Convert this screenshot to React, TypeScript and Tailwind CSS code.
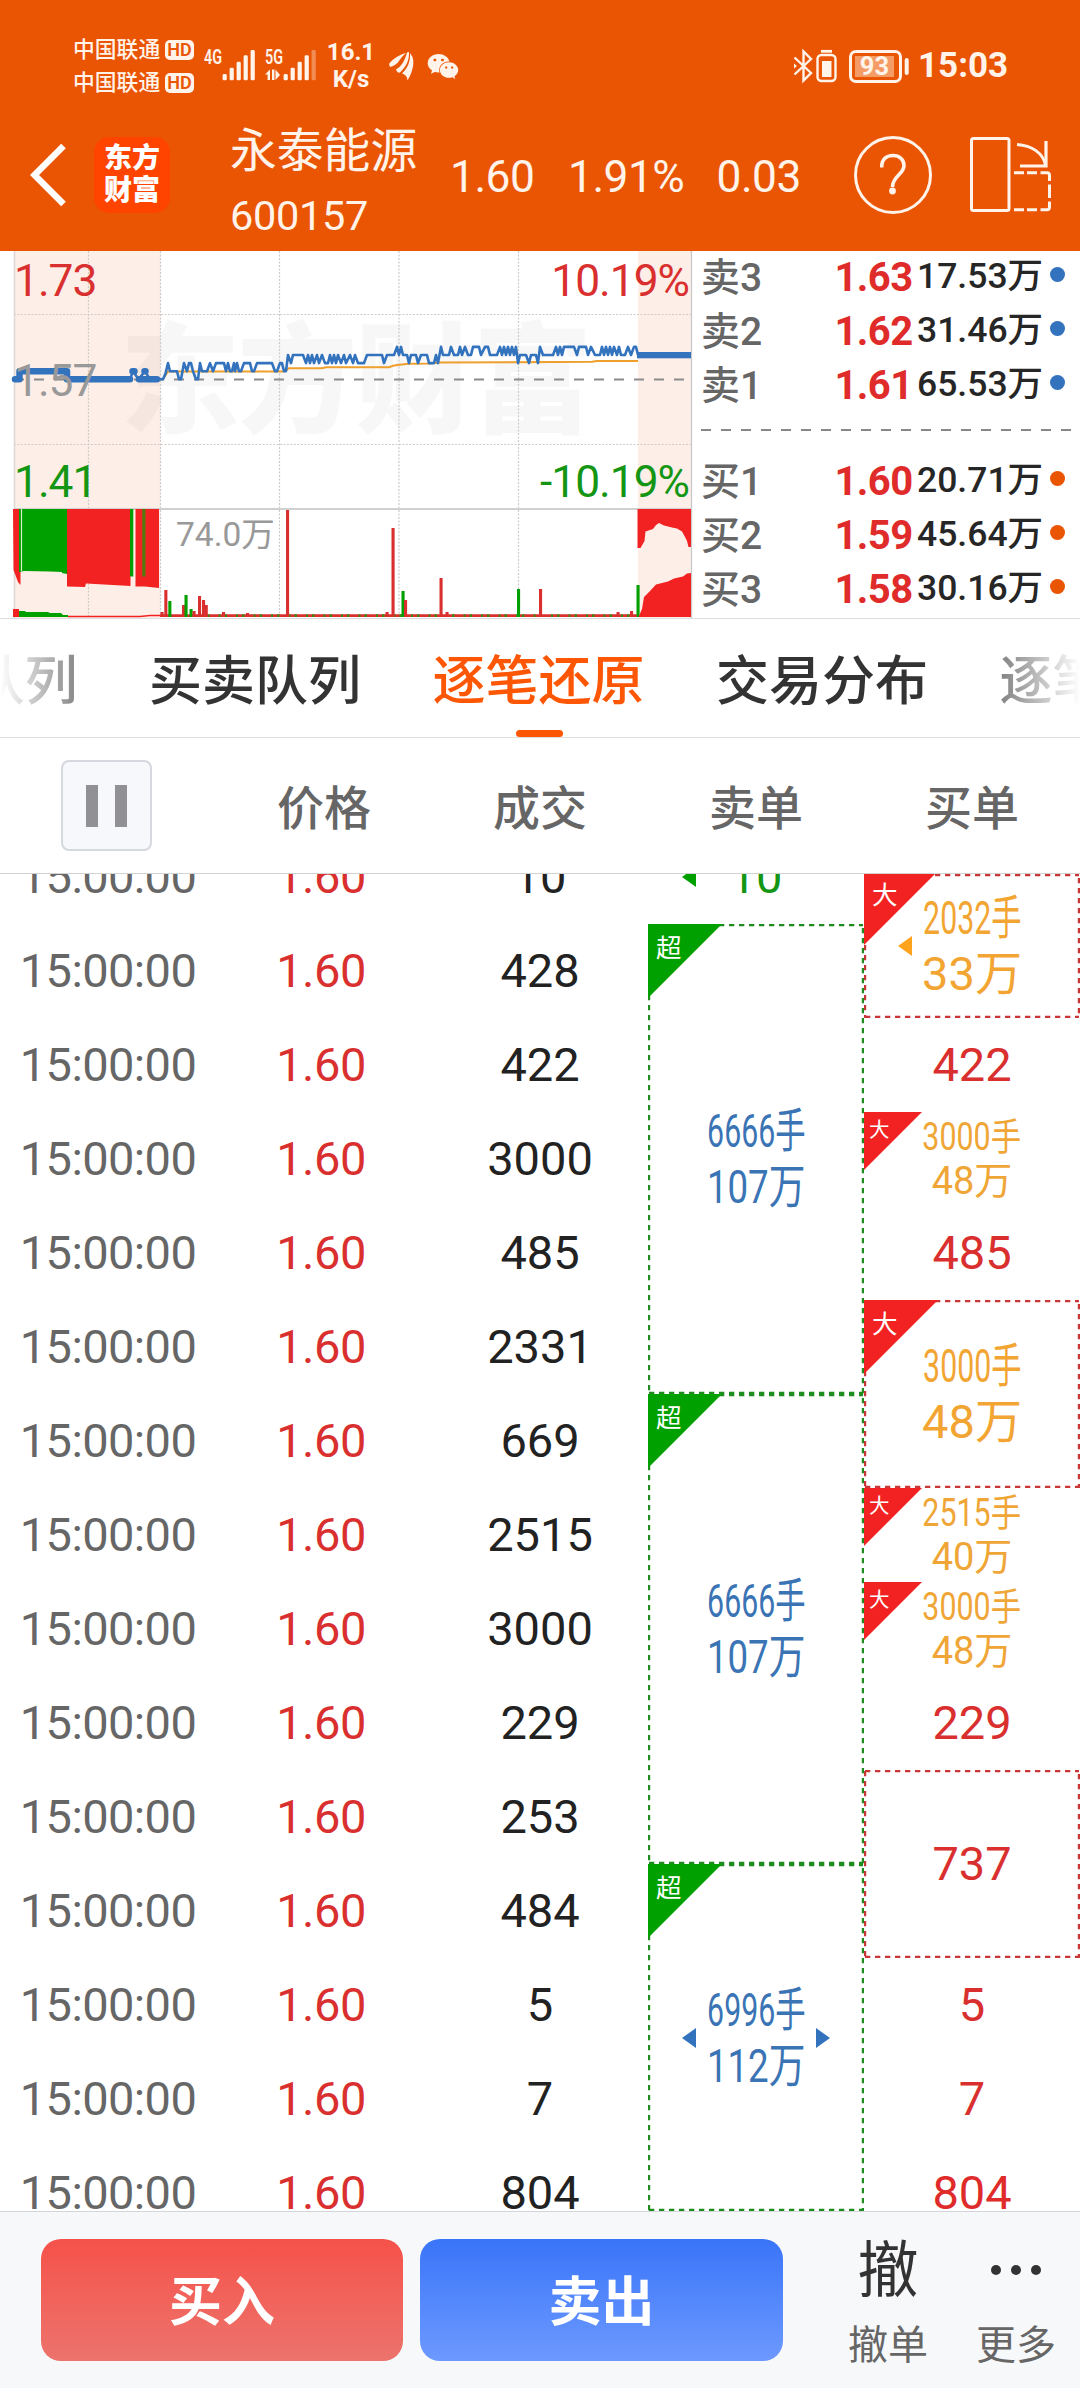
import React from "react";
import { FaWeixin } from "react-icons/fa";

const RED = "#d9302f";
const VOL_RED = "#f32222";
const GREEN = "#00a000";
const BLUE = "#3373bd";

/* ---------------------------------------------------------------- header */

function Carrier() {
  return (
    <div className="flex h-[33px] items-center">
      <span className="w-[92px] text-[21.800px] font-medium leading-[33px]">中国联通</span>
      <span className="flex h-[20px] w-[29px] items-center justify-center rounded-[5px] bg-[#fff3ea] text-[18px] font-semibold leading-[20px] text-[#ea5504]">
        HD
      </span>
    </div>
  );
}

function Signal({ label, faded, data }: { label: string; faded?: boolean; data?: boolean }) {
  const bars = [
    [0, 24],
    [7, 17.7],
    [14, 11.7],
    [21, 5.3],
    [28, 0],
  ];
  return (
    <svg width="52" height="40" viewBox="0 0 52 40" className="shrink-0" fill="#fff3ea">
      <text x="0" y="18" fontSize="20.5" fontWeight="600" textLength="18" lengthAdjust="spacingAndGlyphs">
        {label}
      </text>
      {bars.map(([x, y], i) => (
        <rect
          key={i}
          x={18.6 + x}
          y={4 + y}
          width="4.2"
          height={30.3 - y}
          rx="1.4"
          opacity={faded && i === 4 ? 0.35 : 1}
        />
      ))}
      {data && <path d="M0 28.5 5 23.5V34H2.6V28.5ZM7 23.5h2.4V34H7ZM10.5 23.5l4.5 5.5-4.5 5Z" />}
    </svg>
  );
}

function StatusBar() {
  return (
    <div className="flex h-[66px] items-center pl-[73px] pr-[72px]">
      <div className="flex flex-col">
        <Carrier />
        <Carrier />
      </div>
      <div className="ml-[10px] flex h-full items-center">
        <Signal label="4G" />
        <div className="w-[9px]" />
        <Signal label="5G" faded data />
      </div>
      <div className="ml-[8px] flex w-[52px] flex-col items-center text-[24px] font-bold leading-[27px]">
        <span>16.1</span>
        <span>K/s</span>
      </div>
      <svg width="25" height="29" viewBox="0 0 25 29" className="ml-[12px] shrink-0" fill="#fff3ea">
        <path d="M0 12C4 6.500 10 3 17 1 13 4 11 8 8.500 11 6 13.500 3 14.500 1 15Z" />
        <path d="M7 17.500C13 14 16 8 18 .5L20 0C20.500 8 17 15 11 20.500 9.500 21 8 20.500 7 17.500Z" />
        <path d="M13 21.500C19 16 21.500 9 21 1L23.500 5C25 9 24.500 15 22.500 20 21.500 23 20 26 18.500 28.500 18.500 25.500 17 23 13 21.500Z" />
      </svg>
      <FaWeixin className="ml-[13px] h-[29px] w-[32px] text-[#fff3ea]" />
      <div className="ml-auto flex items-center">
        <svg width="117" height="36" viewBox="794 47 117 36" fill="none" stroke="#fff3ea" strokeWidth="2.4">
          <path d="M795.500 56.500 812 72 804.500 79.500V50.500L812 58 795.500 73.500" />
          <path d="M795 62.500v5l3-2.500Z" fill="#fff3ea" stroke="none" />
          <rect x="818.500" y="54" width="18" height="26" rx="4" />
          <path d="M822 50.300h11" strokeWidth="2.800" />
          <rect x="823" y="60" width="9.500" height="16" fill="#fff3ea" stroke="none" />
          <rect x="851.500" y="50.500" width="50" height="30" rx="5.500" strokeWidth="3" />
          <rect x="856" y="55" width="39" height="21" fill="#f49b66" stroke="none" />
          <rect x="905.700" y="57" width="4" height="17" rx="2" fill="#fff3ea" stroke="none" />
          <text x="875.500" y="74" fontSize="25.500" fontWeight="700" textAnchor="middle" fill="#fff3ea" stroke="none">
            93
          </text>
        </svg>
        <span className="ml-[8px] w-[90px] whitespace-nowrap text-[35px] font-bold leading-[66px]">15:03</span>
      </div>
    </div>
  );
}

function NavBar() {
  return (
    <div className="flex h-[152px] items-center">
      <svg width="36" height="64" viewBox="0 0 36 64" className="ml-[30px] shrink-0" fill="none" stroke="#fff" strokeWidth="6.500">
        <path d="M33.500 3 4.500 32 33.500 61" strokeLinejoin="miter" />
      </svg>
      <div className="ml-[28px] flex h-[76px] w-[76px] shrink-0 flex-col items-center justify-center rounded-[15px] bg-[#ff4400] text-[28px] font-black leading-[32px] text-white">
        <span>东方</span>
        <span>财富</span>
      </div>
      <div className="ml-[60px] flex w-[220px] shrink-0 flex-col pt-[16px]">
        <span className="text-[46.800px] leading-[66px]">永泰能源</span>
        <span className="text-[41.500px] leading-[64px] tracking-[-0.300px]">600157</span>
      </div>
      <div className="flex shrink-0 items-center whitespace-nowrap pt-[3px] text-[44.300px] leading-[60px] tracking-[-0.500px]">
        <span className="w-[118px]">1.60</span>
        <span className="w-[148.500px]">1.91%</span>
        <span className="w-[133.500px]">0.03</span>
      </div>
      <svg width="230" height="80" viewBox="850 135 230 80" className="shrink-0" fill="none" stroke="#fff3ea" strokeWidth="3">
        <circle cx="893" cy="175" r="37.500" />
        <path
          d="M881.700 167.500C881.500 159.500 886 155.500 893 155.500S904 160 904 165.500C904 174.500 892.500 176 892.500 187"
          strokeWidth="3.600"
        />
        <circle cx="892.500" cy="191" r="3.400" fill="#fff3ea" stroke="none" />
        <rect x="971.500" y="138.500" width="37.500" height="72" rx="2" />
        <path d="M1017 144.500C1032 145.500 1043 153 1045.500 165" />
        <path d="M1046 141V166H1020" strokeWidth="3.200" />
        <path d="M1014 172.700h10M1027 172.700h10M1040.500 172.700H1047Q1049.500 172.700 1049.500 175.500V181M1049.500 184.500V198M1049.500 201.500V207Q1049.500 209.700 1047 209.700H1040.500M1037 209.700H1027M1024 209.700H1014" />
      </svg>
    </div>
  );
}

/* ----------------------------------------------------------------- chart */

/* Price ticks above the previous close: [x, ticks]. */
const PRICE: [number, number][] = [
  [158, 0], [163, 0], [165.500, 0.700], [168, 2], [170, 1], [177, 1], [179, 0], [181, 0], [184, 2], [187, 1], [189, 2], [191, 2],
  [193, 1], [196, 0], [198, 0], [200, 2], [202, 1], [207, 1], [210, 2], [213, 1], [216, 2], [224, 2], [226, 1],
  [228, 2], [230, 1], [232, 1], [234, 2], [235, 1], [237, 2], [239, 1], [241, 1], [244, 2], [250, 2], [252, 1],
  [254, 1], [257, 2], [272, 2], [275, 1], [277, 1], [280, 2], [282, 2], [284, 1], [286, 1], [288, 3], [291, 2],
  [293, 3], [303, 3], [306, 2], [308, 3], [310, 2], [312, 3], [314, 2], [317, 3], [319, 2], [322, 3], [325, 2],
  [328, 2], [330, 3], [332, 2], [334, 3], [336, 2], [338, 3], [341, 2], [344, 3], [346, 2], [350, 3], [353, 2],
  [355, 3], [358, 2], [364, 2], [367, 3], [382, 3], [384, 2], [387, 3], [394, 3], [397, 4], [399, 3], [401, 4],
  [403, 3], [407, 3], [409, 2], [411, 3], [416, 3], [418, 2], [421, 3], [427, 3], [429, 2], [434, 2], [436, 3],
  [438, 2], [441, 4], [443, 3], [449, 3], [451, 4], [454, 3], [458, 3], [460, 4], [462, 3], [465, 4], [468, 3],
  [471, 3], [473, 4], [479, 4], [481, 3], [485, 4], [488, 4], [490, 3], [497, 3], [500, 4], [502, 3], [504, 4],
  [506, 3], [508, 4], [510, 3], [512, 4], [514, 3], [516, 4], [518, 2], [520, 3], [524, 3], [526, 3], [529, 2],
  [531, 3], [536, 3], [538, 2], [540, 4], [543, 3], [553, 3], [556, 4], [558, 3], [560, 4], [562, 3], [564, 4],
  [574, 4], [577, 3], [579, 4], [586, 4], [588, 3], [591, 4], [595, 3], [600, 3], [602, 4], [604, 3], [606, 4],
  [608, 3], [610, 4], [612, 3], [614, 4], [617, 3], [619, 4], [621, 3], [625, 3], [628, 4], [631, 3], [634, 4],
  [636, 4], [638, 3],
];

const AVERAGE =
  "163,379 168,371.500 284,371.500 289,368.200 322,368.200 326,367.200 389,367.200 394,365.500 408,363.800 430,363.600 440,362.500 517,362.300 592,361.800 597,361 638,361";

/* Volume spikes: [x, top, colour]. */
const SPIKES: [number, number, string][] = [
  [162, 612, RED], [165.800, 590, RED], [169.800, 601, GREEN], [183.500, 605, RED], [186, 595, GREEN], [191, 609, GREEN],
  [194, 611, RED], [199.500, 596, RED], [203.500, 600, RED], [206.200, 605, RED], [223.500, 612, RED], [247.500, 613, RED],
  [287.500, 510, RED], [387, 612, RED], [393, 528, RED], [403, 591, GREEN], [405.500, 600, RED], [441, 578, RED],
  [447, 612, RED], [518.500, 589, GREEN], [540.500, 589, RED], [618, 612, RED], [631.500, 611, RED], [638, 585, GREEN],
];

const WATERMARK = ["东", "方", "财", "富"];

function TrendChart() {
  return (
    <svg width="693" height="367" viewBox="0 251 693 367" className="shrink-0">
      <rect x="14" y="251" width="146.500" height="367" fill="#fdeee7" />
      <rect x="638" y="251" width="53" height="367" fill="#fdeee7" />
      <g fill="#000" fillOpacity="0.032" fontSize="120" fontWeight="900">
        {WATERMARK.map((c, i) => (
          <text key={c} x={120 + i * 117.500} y="424">
            {c}
          </text>
        ))}
      </g>
      <g stroke="#cfcbc9" strokeWidth="1.200" strokeDasharray="2 1.500">
        {[88.500, 160.500, 279.500, 399, 518.500].map((x) => (
          <line key={x} x1={x} x2={x} y1="251" y2="617" />
        ))}
        <line x1="14" x2="691" y1="314.500" y2="314.500" />
        <line x1="14" x2="691" y1="444.500" y2="444.500" />
      </g>
      <line x1="14.500" x2="14.500" y1="251" y2="618" stroke="#dcd6d4" strokeWidth="1.500" />
      <line x1="691.500" x2="691.500" y1="251" y2="618" stroke="#c9c9c9" strokeWidth="1.300" />
      <line x1="14" x2="691" y1="379.500" y2="379.500" stroke="#8b8b8b" strokeWidth="2" strokeDasharray="10 10" />
      <line x1="14" x2="691" y1="509" y2="509" stroke="#d0d0d0" strokeWidth="2" />

      <polyline points={AVERAGE} fill="none" stroke="#ee9f2c" strokeWidth="2" />
      <polyline
        points={PRICE.map(([x, t]) => `${x},${379.3 - t * 8.1}`).join(" ")}
        fill="none"
        stroke={BLUE}
        strokeWidth="2.600"
        strokeLinejoin="round"
      />
      <g stroke={BLUE} strokeWidth="6.500" fill="none" strokeLinecap="round" strokeLinejoin="round">
        <path d="M15 379.300H19.500V371.200H67V379.300H130M139 379.300H157M132.500 371.200H134.500M144.500 371.200H145.500" />
        <path d="M130 379.300 133 371.200 138.500 379.300 145 371.200 150 379.300" strokeWidth="2.500" />
      </g>
      <rect x="637" y="352" width="54" height="6.300" fill={BLUE} />

      <path d="M13 509H20.500V585L18 582 13.500 570Z" fill={VOL_RED} />
      <path d="M19 509H67V574L62 573V572L50 571.500 24 571 19 572Z" fill={GREEN} />
      <path d="M21.500 509V571" stroke="#d7edca" strokeWidth="1.200" />
      <path d="M67 509H130.500V586L86 583.500 85 587 67 586.500Z" fill={VOL_RED} />
      <rect x="130" y="509" width="3.300" height="67.500" fill={GREEN} />
      <path d="M135.500 509H159V588L145 586.500H135.500Z" fill={VOL_RED} />
      <rect x="142.200" y="509" width="3.300" height="67.500" fill="#57780f" />
      <rect x="13" y="609" width="6" height="8" fill={VOL_RED} />
      <path d="M19 611H25L26 612H48L50 613H61L63 615H68V617H19Z" fill={GREEN} />
      <path d="M68 616.500H140L150 615.500H160" stroke={VOL_RED} strokeWidth="1.600" fill="none" />

      <line x1="160" x2="638" y1="615.700" y2="615.700" stroke={RED} strokeWidth="2.800" />
      <line x1="207" x2="638" y1="615.700" y2="615.700" stroke="#3f8a12" strokeWidth="2.800" strokeDasharray="2.500 9 2 4" />
      {SPIKES.map(([x, y, c]) => (
        <rect key={x} x={x - 1.5} y={y} width="3.100" height={617 - y} fill={c} />
      ))}
      <path
        d="M637.500 509H691V547H688.500L687 541 685 537 682 531.500 677 528.500 672 527.500 664 525.500 659 523 656 525 653 529 645.500 531.500 644.500 541 640.500 548H637.500Z"
        fill={VOL_RED}
      />
      <path
        d="M638.500 617 642 609 644 597 650 591 656 584.500 668 581.500 674 578.500 683 576.500 687 573.500 691 573V617Z"
        fill={VOL_RED}
      />

      <g fontSize="44.300" letterSpacing="-1">
        <text x="14" y="296" fill={RED}>1.73</text>
        <text x="14" y="395.500" fill="#999">1.57</text>
        <text x="14" y="497" fill="#149614">1.41</text>
        <text x="689" y="296" fill={RED} textAnchor="end">10.19%</text>
        <text x="689" y="497" fill="#149614" textAnchor="end">-10.19%</text>
      </g>
      <text x="176" y="545.500" fill="#999" fontSize="33.500">74.0万</text>
    </svg>
  );
}

/* ------------------------------------------------------------ order book */

function BookRow({ label, price, volume, sell }: { label: string; price: string; volume: string; sell?: boolean }) {
  return (
    <div className="flex h-[54px] items-center whitespace-nowrap font-medium">
      <span className="w-[133.500px] text-[39px] leading-[54px] text-[#666]">{label}</span>
      <span className="w-[82.500px] text-[40px] font-bold leading-[54px] tracking-[-0.600px] text-[#e02b2b]">{price}</span>
      <span className="-mt-[4px] w-[132.500px] text-[35.500px] leading-[54px] text-[#262626]">{volume}</span>
      <span className={sell ? "-mt-[8px] size-[15px] rounded-full bg-[#3373bd]" : "-mt-[8px] size-[15px] rounded-full bg-[#ea5504]"} />
    </div>
  );
}

function OrderBook() {
  return (
    <div className="flex flex-1 flex-col pl-[8px]">
      <div className="flex flex-col">
        <BookRow label="卖3" price="1.63" volume="17.53万" sell />
        <BookRow label="卖2" price="1.62" volume="31.46万" sell />
        <BookRow label="卖1" price="1.61" volume="65.53万" sell />
      </div>
      <div className="mt-[16px] h-[2px] w-[370px] bg-[repeating-linear-gradient(90deg,#888_0_10px,transparent_10px_20px)]" />
      <div className="mt-[24px] flex flex-col">
        <BookRow label="买1" price="1.60" volume="20.71万" />
        <BookRow label="买2" price="1.59" volume="45.64万" />
        <BookRow label="买3" price="1.58" volume="30.16万" />
      </div>
    </div>
  );
}

/* ------------------------------------------------------------------ tabs */

const TABS = ["千档队列", "买卖队列", "逐笔还原", "交易分布", "逐笔成交"];

function Tabs() {
  return (
    <div className="relative h-[120px] shrink-0 overflow-hidden border-b border-t border-[#dedede]">
      <div className="-ml-[134.500px] flex h-full w-[1360px] gap-[71.500px] whitespace-nowrap text-[53px] font-medium leading-[126px] text-[#333]">
        {TABS.map((t, i) => (
          <div key={t} className={i === 2 ? "relative w-[212px] shrink-0 text-[#fd5604]" : "w-[212px] shrink-0"}>
            {t}
            {i === 2 && <span className="absolute bottom-0 left-[83px] h-[7px] w-[47px] rounded-[3.500px] bg-[#fd5604]" />}
          </div>
        ))}
      </div>
      <div className="absolute left-0 top-0 h-full w-[130px] bg-gradient-to-r from-white to-transparent" />
      <div className="absolute right-0 top-0 h-full w-[130px] bg-gradient-to-l from-white to-transparent" />
    </div>
  );
}

/* ----------------------------------------------------------------- table */

const PRIMARY = ["10", "428", "422", "3000", "485", "2331", "669", "2515", "3000", "229", "253", "484", "5", "7", "804"];

function Num({ value, className }: { value: string; className: string }) {
  return <div className={`h-[94px] shrink-0 text-center text-[47px] leading-[94px] ${className}`}>{value}</div>;
}

function Frame({ color, height }: { color: string; height: number }) {
  const sell = color === GREEN;
  const x1 = 1;
  const x2 = 215;
  return (
    <svg
      className="absolute inset-0"
      width="216"
      height={height}
      fill="none"
      stroke={sell ? "#1e8c1e" : "#c93636"}
      strokeWidth="2.400"
      strokeDasharray="5.300 4.700"
    >
      <path d={`M${x1} 1H${x2}`} />
      <path d={`M${x1} ${height - 1}H${x2}`} />
      <path d={`M${x1} 1V${height}`} />
      <path d={`M${x2} 1V${height}`} strokeDashoffset="-3" />
    </svg>
  );
}

function Corner({ text, green, small, cut }: { text: string; green?: boolean; small?: boolean; cut?: boolean }) {
  const size = small ? 58 : 74;
  const top = cut ? -3 : 0;
  return (
    <div className="absolute left-0 top-0" style={{ top }}>
      <svg width={size} height={size} className="block">
        <path d={`M0 0H${size}L0 ${size}Z`} fill={green ? GREEN : VOL_RED} />
      </svg>
      <span
        className={
          small
            ? "absolute left-[5px] top-[6px] text-[20.500px] leading-[24px] text-white"
            : "absolute left-[8px] top-[9px] text-[25.500px] leading-[30px] text-white"
        }
      >
        {text}
      </span>
    </div>
  );
}

function Arrow({ right, className }: { right?: boolean; className: string }) {
  return (
    <svg width="14" height="20" viewBox="0 0 14 20" className={`absolute ${className}`} fill="currentColor">
      <path d={right ? "M0 0 14 10 0 20Z" : "M14 0 0 10 14 20Z"} />
    </svg>
  );
}

function SellBox({ hands, amount, arrows, tall }: { hands: string; amount: string; arrows?: boolean; tall?: boolean }) {
  return (
    <div
      className={
        tall
          ? "relative flex h-[470px] shrink-0 flex-col items-center justify-center text-[47px] leading-[56px] text-[#3a74b4]"
          : "relative flex h-[347px] shrink-0 flex-col items-center justify-center text-[47px] leading-[56px] text-[#3a74b4]"
      }
    >
      <Frame color={GREEN} height={tall ? 470 : 347} />
      <Corner text="超" green />
      <span className="scale-x-[0.645] whitespace-nowrap">{hands}</span>
      <span className="scale-x-[0.780] whitespace-nowrap">{amount}</span>
      {arrows && <Arrow className="left-[34px] top-[164px] text-[#3373bd]" />}
      {arrows && <Arrow right className="right-[34px] top-[164px] text-[#3373bd]" />}
    </div>
  );
}

function BuyBox({ hands, amount, clipped }: { hands: string; amount: string; clipped?: boolean }) {
  return (
    <div
      className={
        clipped
          ? "relative flex h-[144px] shrink-0 flex-col items-center justify-center text-[47px] leading-[56px] text-[#f2a533]"
          : "relative flex h-[188px] shrink-0 flex-col items-center justify-center text-[47px] leading-[56px] text-[#f2a533]"
      }
    >
      <Frame color={RED} height={clipped ? 144 : 188} />
      <Corner text="大" cut={clipped} />
      <span className="scale-x-[0.645] whitespace-nowrap">{hands}</span>
      <span className="whitespace-nowrap">{amount}</span>
      {clipped && <Arrow className="left-[34px] top-[62px] text-[#ffa31f]" />}
    </div>
  );
}

function BuySmall({ hands, amount }: { hands: string; amount: string }) {
  return (
    <div className="relative flex h-[94px] shrink-0 flex-col items-center justify-center text-[38px] leading-[44.500px] text-[#efa636]">
      <Corner text="大" small />
      <span className="scale-x-[0.800] whitespace-nowrap">{hands}</span>
      <span className="whitespace-nowrap">{amount}</span>
    </div>
  );
}

function TableHead() {
  return (
    <div className="grid h-[136px] shrink-0 grid-cols-5 items-center border-b border-[#d3d3d3] text-center text-[47px] font-medium text-[#666]">
      <div className="ml-[61px] flex h-[91px] w-[91px] items-center justify-center gap-[16.500px] rounded-[8px] border-2 border-[#d5d8de] bg-[#f7f8fb]">
        <span className="h-[42px] w-[12.500px] bg-[#919095]" />
        <span className="h-[42px] w-[12.500px] bg-[#919095]" />
      </div>
      <span className="pt-[6px] leading-[60px]">价格</span>
      <span className="pt-[6px] leading-[60px]">成交</span>
      <span className="pt-[6px] leading-[60px]">卖单</span>
      <span className="pt-[6px] leading-[60px]">买单</span>
    </div>
  );
}

function TableBody() {
  return (
    <div className="grid h-[1337px] shrink-0 grid-cols-5 overflow-hidden">
      <div className="-mt-[44px] flex flex-col tracking-[-0.600px]">
        {PRIMARY.map((_, i) => (
          <Num key={i} value="15:00:00" className="text-[#666]" />
        ))}
      </div>
      <div className="-mt-[44px] flex flex-col pr-[6px] tracking-[-0.500px]">
        {PRIMARY.map((_, i) => (
          <Num key={i} value="1.60" className="text-[#d9302f]" />
        ))}
      </div>
      <div className="-mt-[44px] flex flex-col">
        {PRIMARY.map((v, i) => (
          <Num key={i} value={v} className="text-[#222]" />
        ))}
      </div>
      <div className="-mt-[44px] flex flex-col">
        <div className="relative">
          <Num value="10" className="text-[#149614]" />
          <Arrow className="left-[34px] top-[37px] text-[#00a000]" />
        </div>
        <SellBox hands="6666手" amount="107万" tall />
        <SellBox hands="6666手" amount="107万" tall />
        <SellBox hands="6996手" amount="112万" arrows />
      </div>
      <div className="flex flex-col">
        <BuyBox hands="2032手" amount="33万" clipped />
        <Num value="422" className="text-[#d9302f]" />
        <BuySmall hands="3000手" amount="48万" />
        <Num value="485" className="text-[#d9302f]" />
        <BuyBox hands="3000手" amount="48万" />
        <BuySmall hands="2515手" amount="40万" />
        <BuySmall hands="3000手" amount="48万" />
        <Num value="229" className="text-[#d9302f]" />
        <div className="relative flex h-[188px] shrink-0 flex-col justify-center">
          <Frame color={RED} height={188} />
          <Num value="737" className="text-[#d9302f]" />
        </div>
        <Num value="5" className="text-[#d9302f]" />
        <Num value="7" className="text-[#d9302f]" />
        <Num value="804" className="text-[#e02b2b]" />
      </div>
    </div>
  );
}

/* ---------------------------------------------------------------- footer */

function Footer() {
  return (
    <div className="flex h-[177px] shrink-0 border-t border-[#d3d5d8] bg-[#f7f8fa] pl-[41px] pt-[27px]">
      <button className="flex h-[122px] w-[362px] shrink-0 items-center justify-center rounded-[20px] bg-gradient-to-b from-[#f5514a] to-[#ec736c] pt-[6px] text-[53px] font-bold leading-[60px] text-white">
        买入
      </button>
      <button className="ml-[17px] flex h-[122px] w-[363px] shrink-0 items-center justify-center rounded-[20px] bg-gradient-to-b from-[#3974f8] to-[#6d99ff] pt-[6px] text-[53px] font-bold leading-[60px] text-white">
        卖出
      </button>
      <div className="ml-[41px] flex w-[128px] shrink-0 flex-col items-center text-[#333]">
        <span className="mt-[1px] text-[61px] leading-[62px]">撤</span>
        <span className="mt-[20px] text-[40px] leading-[48px] text-[#666]">撤单</span>
      </div>
      <div className="flex w-[128px] shrink-0 flex-col items-center">
        <div className="mt-[1px] flex h-[60px] items-center gap-[9.500px]">
          <span className="size-[10.500px] rounded-full bg-[#333]" />
          <span className="size-[10.500px] rounded-full bg-[#333]" />
          <span className="size-[10.500px] rounded-full bg-[#333]" />
        </div>
        <span className="mt-[22px] text-[40px] leading-[48px] text-[#666]">更多</span>
      </div>
    </div>
  );
}

export default function App() {
  return (
    <div className="flex h-[2388px] w-[1080px] flex-col overflow-hidden bg-white font-[Roboto,'Noto_Sans_CJK_SC',sans-serif]">
      <header className="h-[251px] shrink-0 bg-[#ea5504] pt-[33px] text-[#fff3ea]">
        <StatusBar />
        <NavBar />
      </header>
      <section className="flex h-[367px] shrink-0">
        <TrendChart />
        <OrderBook />
      </section>
      <Tabs />
      <TableHead />
      <TableBody />
      <Footer />
    </div>
  );
}
